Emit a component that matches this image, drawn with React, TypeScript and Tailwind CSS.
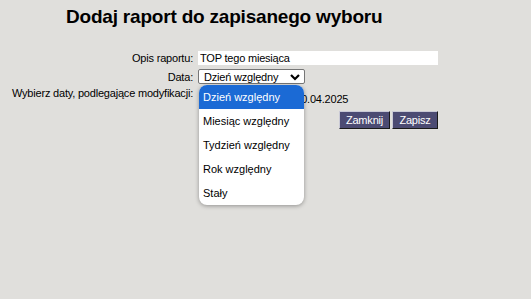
import { useState } from "react";

const OPTIONS = ["Dzień względny", "Miesiąc względny", "Tydzień względny", "Rok względny", "Stały"];

function Label({ children }: { children: React.ReactNode }) {
  return <div className="pr-[5px] text-right">{children}</div>;
}

export default function App() {
  const [opis, setOpis] = useState("TOP tego miesiąca");
  const [active] = useState(0);

  return (
    <div className="min-h-screen bg-[#e0dfdc] font-['Liberation_Sans',Arial,sans-serif] text-black">
      <h1 className="pl-[66px] pt-[6px] text-[19px] font-bold leading-[22px] tracking-[-0.2px]">
        Dodaj raport do zapisanego wyboru
      </h1>

      <div className="mt-[23px] grid grid-cols-[198px_240px] text-[11px] leading-[14px] tracking-[-0.2px]">
        {/* opis */}
        <Label>Opis raportu:</Label>
        <input
          value={opis}
          onChange={(e) => setOpis(e.target.value)}
          className="h-[14px] w-[240px] bg-white px-[2px] text-[11px] leading-[14px] tracking-[-0.2px] outline-none"
        />

        {/* data */}
        <div className="mt-[4px] flex h-[15px] items-center justify-end pr-[5px]">Data:</div>
        <div className="relative mt-[4px] w-[107px]">
          <div className="flex h-[15px] items-center justify-between rounded-[2px] border border-[#767676] bg-white pl-[5px] pr-[4px]">
            <span>Dzień względny</span>
            <svg width="10" height="7" viewBox="0 0 10 7" className="mt-[1px]">
              <polyline points="1,1 5,5 9,1" fill="none" stroke="#000" strokeWidth="2.2" />
            </svg>
          </div>
          <ul className="absolute left-[1px] top-[16px] z-10 w-[105px] overflow-hidden rounded-[8px] bg-white shadow-[0_1px_4px_rgba(0,0,0,0.35)]">
            {OPTIONS.map((o, i) => (
              <li
                key={o}
                className={
                  i === active
                    ? "flex h-[24px] items-center bg-[#1b6ad5] pl-[4px] text-[11px] tracking-normal text-white"
                    : "flex h-[24px] items-center pl-[4px] text-[11px] tracking-normal text-black"
                }
              >
                {o}
              </li>
            ))}
          </ul>
        </div>

        {/* daty */}
        <div className="mt-[3px] pr-[5px] text-right leading-[13px]">Wybierz daty, podlegające modyfikacji:</div>
        <div className="mt-[3px] pl-[35px] pt-[6px] leading-[13px]">01.04.2025 - 30.04.2025</div>

        {/* przyciski */}
        <div />
        <div className="mt-[5px] flex justify-end gap-[2px]">
          <button className="h-[18px] w-[51px] border border-b-[#1a1a1a] border-l-[#c9c9d6] border-r-[#1a1a1a] border-t-[#c9c9d6] bg-[#4c4b73] text-[11px] leading-[14px] text-white">
            Zamknij
          </button>
          <button className="h-[18px] w-[46px] border border-b-[#1a1a1a] border-l-[#c9c9d6] border-r-[#1a1a1a] border-t-[#c9c9d6] bg-[#4c4b73] text-[11px] leading-[14px] text-white">
            Zapisz
          </button>
        </div>
      </div>
    </div>
  );
}
